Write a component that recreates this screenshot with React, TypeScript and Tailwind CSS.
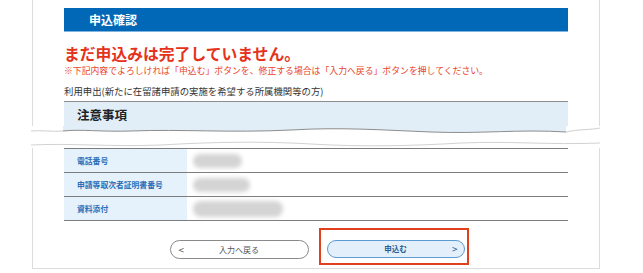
import React from "react";

const rows = [
  { label: "電話番号", blob: "w-[49px] h-[14px]" },
  { label: "申請等取次者証明書番号", blob: "w-[57px] h-[14px]" },
  { label: "資料添付", blob: "w-[90px] h-[16px]" },
];

function Tear() {
  return (
    <svg width="569" height="22" viewBox="0 0 569 22" className="-mx-[33px] block bg-white">
      {/* heading bottom, torn */}
      <path
        d="M32 0 H535 V6 C 490 3, 450 8, 400 6 C 350 4, 310 1, 260 4 C 200 7, 150 3, 100 5 C 70 6, 50 3, 32 5 Z"
        fill="#e1eef8"
      />
      <path
        d="M535 6 C 490 3, 450 8, 400 6 C 350 4, 310 1, 260 4 C 200 7, 150 3, 100 5 C 70 6, 50 3, 32 5"
        fill="none"
        stroke="#8d8d8d"
        strokeWidth="1"
      />
      <path d="M0 5 C 12 4, 22 6, 32 5 M535 6 C 548 3, 560 4, 569 2" fill="none" stroke="#cfcfcf" strokeWidth="1" />
      {/* lower torn edge */}
      <path
        d="M0 19 C 40 17, 80 21, 130 19 C 180 16, 230 15, 280 18 C 330 21, 380 20, 430 17 C 480 15, 520 19, 569 17"
        fill="none"
        stroke="#d2d2d2"
        strokeWidth="1"
      />
    </svg>
  );
}

export default function App() {
  return (
    <div className="w-[643px] h-[273px] bg-white overflow-hidden" style={{ fontFamily: '"Noto Sans CJK JP", "Noto Sans", sans-serif' }}>
      <div className="ml-[32px] w-[568px] border-x border-b border-[#dcdcdc] px-[31px] pt-[8px] pb-[3px]">
        {/* Title bar */}
        <div className="h-[24px] bg-[#0068b7] border-b border-[#7fb3e0] flex items-center pl-[25px]">
          <span className="text-white text-[12px] font-bold leading-none">申込確認</span>
        </div>

        {/* Messages */}
        <div className="mt-[12px] text-[#e5321b] text-[15.8px] font-bold leading-[20px] whitespace-nowrap">まだ申込みは完了していません。</div>
        <div className="mt-[1px] text-[#e8452a] text-[8.85px] leading-[12px] whitespace-nowrap">
          ※下記内容でよろしければ「申込む」ボタンを、修正する場合は「入力へ戻る」ボタンを押してください。
        </div>
        <div className="mt-[7px] text-[#333] text-[9.4px] leading-[14px] whitespace-nowrap">
          利用申出(新たに在留諸申請の実施を希望する所属機関等の方)
        </div>

        {/* Table */}
        <div className="mt-[3px]">
          <div className="border-t border-[#8d8d8d] bg-[#e1eef8] h-[25px] flex items-end pl-[13px]">
            <span className="text-[12.5px] font-bold text-[#222] leading-[22px]">注意事項</span>
          </div>
          <Tear />
          <div className="border-t border-[#7d7d7d]">
            {rows.map((r) => (
              <div key={r.label} className="flex h-[24px] border-b border-[#7d7d7d]">
                <div className="w-[123px] bg-[#e5f1fb] flex items-center pl-[13px]">
                  <span className="text-[7.8px] font-bold text-[#2a6fb8] whitespace-nowrap">{r.label}</span>
                </div>
                <div className="flex-1 flex items-center pl-[6px]">
                  <div className={`${r.blob} rounded-full bg-[#d4d4d4] blur-[2px]`} />
                </div>
              </div>
            ))}
          </div>
        </div>

        {/* Buttons */}
        <div className="flex justify-center items-start gap-[10px] pt-[7px] pl-[6px]">
          <button className="mt-[12px] w-[139px] h-[19px] rounded-full border border-[#8a8a8a] bg-white relative flex items-center justify-center">
            <span className="absolute left-[8px] top-[1px] text-[10px] leading-[16px] text-[#555]">&lt;</span>
            <span className="text-[8px] text-[#555] leading-none">入力へ戻る</span>
          </button>
          <div className="h-[37px] w-[150px] border-2 border-[#e2401c] pt-[10px] pl-[6px] pr-[2px]">
            <button className="w-[138px] h-[18px] rounded-full border border-[#5b9ad3] bg-[#e3f0fb] relative flex items-center justify-center">
              <span className="text-[7.5px] font-bold text-[#2a5d92] leading-none">申込む</span>
              <span className="absolute right-[6px] top-[0px] text-[10px] leading-[16px] text-[#2a5d92]">&gt;</span>
            </button>
          </div>
        </div>
      </div>
    </div>
  );
}
